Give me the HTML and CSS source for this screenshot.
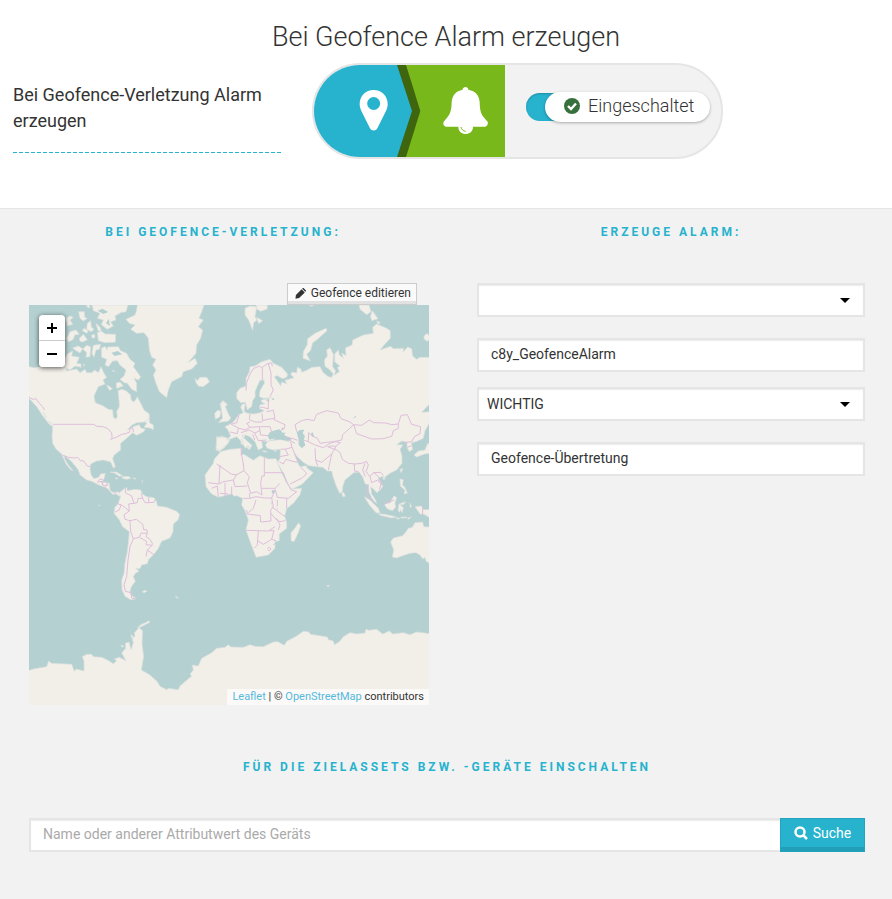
FILE: index.html
```html
<!DOCTYPE html>
<html lang="de">
<head>
<meta charset="utf-8">
<title>Bei Geofence Alarm erzeugen</title>
<link rel="stylesheet" href="styles.css">
</head>
<body>
<header class="intro">
  <h1 class="title">Bei Geofence Alarm erzeugen</h1>
  <div class="rule-row">
    <p class="rule-text">Bei Geofence-Verletzung Alarm erzeugen</p>
    <div class="rule-pill">
      <svg class="flow" viewBox="42 45 573 276" aria-hidden="true">
        <path fill="#79b81b" d="M292 45H615V321H292z"/>
        <path fill="#3f650f" d="M280 45H318L361 183 318 321H280z"/>
        <path fill="#27b2ce" d="M42 45H291L336 183 291 321H42z"/>
        <path fill="#fff" fill-rule="evenodd" d="M221 120c-24 0-42 18-42 42 0 8 2 14 5 21l26 52c4 9 18 9 22 0l26-52c3-7 5-13 5-21 0-24-18-42-42-42zm0 21a19.500 19.500 0 1 1 0 39 19.500 19.500 0 0 1 0-39z"/>
        <path fill="#fff" d="M488 119c0-11 17-11 17 0 22 4 33 18 34 38 1 26 2 37 24 58 2 8-2 15-10 15H519c0 29-44 29-44 0h-34c-9 0-13-7-10-15 21-21 23-32 24-58 1-20 12-34 33-38z"/>
        <path fill="none" stroke="#79b81b" stroke-width="3" d="M483 231c1 7 6 12 14 13"/>
      </svg>
      <label class="switch">
        <input class="switch-input" type="checkbox" checked>
        <span class="switch-thumb">
          <svg class="check" viewBox="0 0 16 16" aria-hidden="true"><circle cx="8" cy="8" r="8" fill="#37703c"/><path d="M4 8l3 3 5-5.500" fill="none" stroke="#fff" stroke-width="2.400"/></svg>
          Eingeschaltet
        </span>
      </label>
    </div>
  </div>
</header>
<main class="panel">
  <div class="columns">
    <section class="column">
      <h2 class="heading">Bei Geofence-Verletzung:</h2>
      <div class="map-area">
      <div class="map-tools">
        <button class="edit" type="button"><svg class="pencil" viewBox="0 0 12 12" aria-hidden="true"><path fill="#333" d="M1 7.500l6.200-6.200 3.500 3.500L4.500 11l-4 .6zM7.800.8l.5-.5c.4-.4.900-.4 1.300 0l2.100 2.100c.4.400.4.900 0 1.300l-.5.500z"/></svg>Geofence editieren</button>
      </div>
      <div class="map">
        <svg class="world" viewBox="0 0 1200 1200" role="img" aria-label="Weltkarte">
          <path fill="#b5d0d0" d="M0 0H1200V1200H0z"/>
          <g transform="translate(-27 -105)">
            <path class="land" d="M20 288L40 293 60 290 100 285 137 290 140 303 170 297 180 308 195 298 200 308 215 308 225 300 235 308 243 290 252 310 260 322 249 330 255 342 235 350 222 378 226 398 250 408 265 418 278 420 280 442 287 447 292 440 290 425 298 410 297 390 294 362 305 358 318 362 332 375 333 388 340 396 347 390 352 380 362 400 372 420 388 432 388 448 375 456 350 458 335 466 322 480 345 468 358 464 362 474 376 478 370 486 350 496 338 488 320 505 302 520 302 540 282 556 278 566 286 590 280 594 272 576 250 570 230 573 212 582 210 600 214 616 222 626 236 622 242 612 256 610 252 626 246 636 268 640 270 660 278 667 297 666 299 679 288 672 278 673 262 655 235 644 215 634 200 630 180 615 175 600 155 575 140 562 131 557 135 568 145 585 159 602 152 599 138 582 125 552 108 537 98 520 96 500 98 470 88 463 70 440 50 410 27 385 20 383z"/>
            <path class="land" d="M352 105L350 120 345 135 318 148 328 160 345 165 332 178 350 190 372 188 385 205 388 240 395 262 408 268 398 285 408 300 400 315 408 340 418 365 440 383 445 360 455 335 485 320 490 305 515 297 532 280 525 265 505 277 528 250 530 225 542 205 548 180 535 170 550 150 537 145 545 125 552 105z"/>
            <path class="land" d="M525 325L532 332 540 322 560 322 569 335 550 350 535 348 528 338zM244 235L255 229 262 240 262 231 295 230 302 242 320 250 330 268 345 280 340 290 362 320 356 330 342 325 350 340 350 365 335 358 322 340 312 338 300 328 312 318 318 300 300 285 292 272 278 273 265 290 255 285 260 268 245 262zM260 345L270 350 277 357 268 361zM288 340L300 336 310 348 300 351 291 356zM278 300L288 306 295 312 282 318zM375 455L388 445 388 458 400 465 400 479 390 474 372 472 380 460zM232 187L245 184 255 192 287 193 286 217 255 218 235 212zM216 105L220 122 240 130 232 145 250 150 244 164 262 178 280 168 272 155 288 150 285 138 302 128 318 125 324 105zM188 237L200 226 212 230 210 260 198 262 200 248zM220 226L242 223 238 238 228 240 222 262 216 250zM142 252L158 243 155 258 178 262 170 280 195 284 185 292 165 288 150 300 130 290 135 265zM158 234L175 228 188 236 180 249 165 240zM140 205L150 185 168 180 178 193 164 195 160 208 145 216zM178 205L190 193 202 209 188 216 180 214zM138 145L150 138 160 142 150 150 158 163 142 168zM176 125L193 125 194 142 202 145 190 153 180 145zM202 160L212 152 214 171 222 178 214 185 200 178zM228 160L240 172 244 184 234 182zM200 105L208 105 210 114 202 112zM192 175L205 182 200 190 187 182zM215 195L224 193 225 203 216 204zM270 606L290 606 308 618 298 619 285 610zM308 620L325 619 333 625 320 628 306 625zM285 624L294 624 291 628zM338 624L347 624 346 628zM584 430L594 420 602 424 600 440 586 448zM600 402L608 392 620 400 614 408 624 430 632 445 625 452 596 457 610 444 606 426zM70 425L79 442 76 444zM86 453L100 464 97 469zM310 657L315 654M366 630L368 640z"/>
            <path class="water" d="M262 307L290 304 300 320 282 325 274 332 262 326zM225 300l5-18 5 20zM205 284l4-20 4 20zM275 248l18-5 14 10-24 5zM182 290l5-20 3 22zM233 122l14-6 18 10-15 6zM258 160l8-14 4 22z"/>
            <path class="border" d="M27 381L38 388 48 386 58 400 67 409 74 420M100 463H222L230 469 250 470 265 477 275 489 276 503 272 508 290 501 305 493 320 490 329 486 330 475 339 475 340 486M128 555L145 562 165 564 173 562 182 573 190 572 202 588 211 590M232 638L240 627 249 628M244 637L252 648 265 645M255 650L258 660M283 663L286 672"/>
          </g>
          <g transform="translate(573 -105)">
            <path class="land" d="M-10 500L25 505 32 498 24 480 15 470 35 460 45 450 55 435 70 428 62 412 66 403 76 401 72 424 82 430 100 432 120 428 133 422 118 415 120 404 135 402 124 395 124 390 155 383 130 385 118 380 120 362 133 340 132 330 120 331 112 348 105 365 106 380 98 392 95 410 82 419 76 397 62 398 50 385 50 368 60 355 78 348 78 325 88 305 90 290 105 288 125 275 150 268 160 280 185 292 203 312 200 322 188 326 172 317 163 320 172 333 182 347 185 336 200 341 195 331 222 323 212 313 217 306 230 309 232 292 243 297 245 307 262 300 275 292 300 290 310 308 325 320 335 322 340 312 330 300 315 289 313 270 322 258 320 240 330 233 340 253 338 290 347 303 342 316 358 305 352 292 360 289 344 275 344 252 355 240 358 255 370 264 365 249 378 257 376 234 396 225 398 210 430 195 460 190 458 172 470 162 500 175 511 182 511 205 495 222 480 240 512 229 520 236 550 235 550 245 563 231 575 236 578 258 590 268 600 262 632 262 632 399 615 416 605 427 632 425 632 453 615 482 610 505 588 515 574 518 578 538 568 545 561 532 561 517 545 513 530 524 549 525 540 538 546 558 546 580 530 600 510 610 494 622 486 619 474 626 489 648 482 658 471 668 458 655 452 650 455 672 467 690 470 700 458 690 447 666 445 645 435 641 428 620 417 606 401 608 375 630 368 650 367 665 359 670 349 649 339 620 335 603 322 603 308 592 290 590 266 587 250 577 238 566 222 550 233 578 240 590 258 587 262 595 280 608 261 628 246 643 212 660 204 640 190 610 172 577 180 566 181 538 160 540 142 535 136 525 145 512 185 509 208 515 192 500 175 499 155 512 140 515 125 512 128 533 115 540 105 515 90 500 75 494 72 505 97 527 89 533 84 527 77 535 60 510 50 500 32 507 20 508 27 518 0 541 -12 535zM0 545L30 538 65 535 62 555 72 553 100 571 120 557 145 567 168 566 174 579 186 612 205 645 215 657 245 655 240 674 220 700 200 716 194 738 200 758 200 775 178 792 178 812 165 815 165 835 145 855 108 862 102 845 92 820 78 780 85 750 75 722 65 705 68 685 50 677 42 679 36 671 -5 682 -25 672 -42 650 -45 615 -20 580 -17 567 -2 550zM-10 505L5 499 20 503 30 510 15 532-2 544-12 540z"/>
            <path class="land" d="M3 401L10 396 23 405 15 409 24 430 32 444 25 453-4 457 8 444 5 426zM75 115L90 108 110 110 105 140 111 150 101 158 98 181 86 150 75 135zM108 105L142 105 142 117 122 124 109 117zM110 142L128 152 116 161zM318 175L321 182 290 210 278 218 272 241 260 253 271 272 249 265 250 245 262 223 262 207 285 190zM417 105L447 105 453 125 440 134 420 118zM457 122L474 146 456 152 451 140zM470 153L481 158 474 163zM612 198L622 190 632 205 622 214 612 207zM266 105L280 106 276 109zM68 492l3 12-4-2zM64 507l5 3-1 14-5-2zM78 530l15 2-5 7zM126 542l16 2-8 3zM162 542l8-3-3 6zM365 667l7 1 4 11-8 1zM236 758L242 768 234 790 222 815 213 812 213 788 223 777zM433 680L450 690 475 715 480 728 469 729 448 705zM475 731L495 733 530 741 515 744 480 736zM495 701L510 699 522 677 530 683 525 698 527 712 517 722 503 717 495 708zM537 702L557 695 550 704 540 704 550 713 547 728 541 718 540 727 534 722zM540 627L550 629 547 645 555 652 562 670 552 672 555 661 541 648zM540 598L549 596 543 608zM488 623L497 622 492 630zM582 555L595 543 615 540 623 520 632 525 632 550 614 552 590 561zM530 744h8v3h-9zM542 741h18v3h-18zM562 745l12-5-8 8zM570 700l5 10-5 2zM585 710L604 708 610 719 632 718 632 745 612 733 600 732zM320 947l8-1-3 5z"/>
            <path class="land" d="M632 771L612 770 609 762 608 756 585 758 577 772 565 775 558 785 548 797 520 804 512 816 521 840 517 861 530 864 548 857 570 850 588 848 600 855 608 867 614 862 618 873 632 883z"/>
            <path class="water" d="M148 509L143 497 150 486 160 482 178 478 189 489 197 487 192 495 215 506 210 512 190 510 170 504zM230 487L240 480 253 479 248 489 255 499 251 510 256 526 245 535 236 524 236 509zM140 388h8v6h-8zM157 385h5v5h-5zM273 490l5-3 4 12-5 2zM155 661l9 0 0 9-8 0zM152 690l3 13-2 0zM170 708l3 10-2 0zM398 446l9-9 2 3zM185 472l8 4-7 4z"/>
            <path class="border" d="M78 362L79 340 90 312 100 296 118 288 125 293 144 280 155 279 157 289M127 293V330M145 280L153 310 153 345 160 360 150 380M145 390V417L130 412 120 412M140 425L160 421 165 445 142 448 128 452 126 430M90 432L88 449 105 456 128 456M35 460L50 459 53 448 57 435M33 462L55 474 52 491 30 486M55 474L75 480 90 472 80 460 90 456M90 472L118 470 120 482 104 489 88 480 63 488M118 470L150 470 155 486M104 489L115 512 140 510M120 482L122 495 145 497M98 493L104 510M160 448L195 464 193 475 182 481M230 485L225 464 245 452 262 448 282 452 290 433 320 422 355 429 363 446 388 455 401 464 388 476 368 494 365 510 340 515 320 517 300 520 292 504 276 498 266 488 265 515 250 510M401 464L425 466 448 450 461 458 498 459 515 464 535 462 535 475 520 482 515 499 490 506 455 507 410 491 401 464M535 462L543 436 562 434 575 463 602 470 600 491 583 500 575 515 552 518M562 532L575 527M265 515L285 525 310 533 330 520 345 515 361 518 347 529 332 528 323 530 350 540 360 548 367 568 385 580 405 582 425 580 440 574 445 585 438 605 450 620 460 608 482 607 490 616M403 582L404 604 415 604M435 580L428 600 436 620M285 535L287 570 305 577 335 552 348 530M335 552L328 586 325 600M287 570L293 588M183 537L195 538 216 532 212 515M216 532L235 576M178 560L205 555 195 538M178 575L190 582 198 568 218 574 232 577M210 642L248 623 260 610 242 591M200 502L220 506 233 511M208 510L225 520M450 620L455 638 473 630 487 647M462 608L475 620 485 638 478 658M444 642L443 680 460 690M495 701L522 690M608 709V735"/>
            <path class="border" d="M63 533L65 555 70 582 72 602 50 614 35 613-10 582M0 585L-3 642-35 638M133 562V608H190M133 608V618H126L122 640 126 675 110 665 92 670 82 638 88 620 72 602M50 614L40 630 10 635-3 642M40 630L45 650 82 648M15 638L15 680M35 650V675M-25 655L-8 648-5 682M0 670L25 672M190 608L198 634 205 645 215 660 230 665 205 685 172 682 165 655 180 640M165 655L126 655M88 670L90 685 70 685M90 685L108 680 133 684 155 684 165 660M155 684L160 710 152 720 153 753 122 756 121 737 82 732 80 720M108 690L100 715 85 728M155 710L195 740M172 690V708M152 730L170 750 180 755 195 752M78 781L145 783 165 770M115 783L112 825 102 835M112 812L130 823 155 808 162 782 147 782M155 808L168 812M142 836L148 831 153 836 149 842 143 840M160 825l5-5M170 745L180 765 175 780M200 685V715"/>
          </g>
          <g transform="translate(-27 525)">
            <path class="land" d="M292 45L305 32 320 22 322 32 345 28 362 30 367 42 380 50 402 53 410 66 412 78 440 82 470 94 479 104 474 120 460 132 459 155 450 174 425 184 415 205 400 225 386 238 382 251 365 255 360 266 348 265 357 274 346 280 340 290 346 304 334 320 330 334 334 346 348 356 333 360 315 349 306 330 305 300 312 280 315 248 321 220 325 190 328 155 308 140 298 120 282 100 284 83 295 70 302 48zM366 336l8-5 7 2-8 5zM465 349l8 2 1 5zM236 75l4 1-1 3z"/>
            <path class="land" d="M20 573L45 566 80 560 86 543 94 550 155 553 163 574 168 567 192 573 192 543 187 530 200 523 215 523 220 530 245 532 262 540 280 551 290 542 283 537 298 532 318 542 305 519 317 505 316 490 327 486 333 509 340 489 337 475 345 468 343 458 357 443 368 452 366 490 371 530 364 570 390 585 412 605 420 619 440 629 445 625 475 629 480 618 515 588 510 582 520 570 517 555 535 558 545 535 575 518 590 505 615 502 625 494 632 501 670 502 690 494 705 499 730 500 760 486 773 485 793 496 800 484 830 468 850 454 865 455 872 463 922 471 925 479 940 483 943 494 958 485 970 470 990 458 1010 462 1035 459 1038 447 1045 451 1070 448 1088 462 1108 453 1118 462 1150 458 1170 464 1190 456 1230 461V680H20zM352 443l12-10 15-6 7-5 4 5-20 10-16 7zM333 463l7 7-5 5zM303 496l9 2-6 4z"/>
            <path class="border" d="M316 24L316 38 335 48 342 70 326 72 328 93 305 75 288 70M303 75L298 90 285 96M328 93L312 104 315 118 330 122 332 155 340 176 330 200 324 240 320 290 312 315 316 334 333 338 335 355 346 356M342 70L352 68 354 55 368 55 364 40M368 55L375 68 385 68 402 67 405 60M386 52V67M330 122L349 118 368 132 371 149 381 150 382 160 363 159 358 172 340 176M382 160L378 170 390 178 397 190 396 196 378 194 380 184 360 173M396 196L382 210 402 224M382 210L378 230M234 6L247 4 248 14M258 15L263 9"/>
          </g>
        </svg>
        <div class="zoom">
          <button class="zoom-button" type="button" aria-label="Vergrößern"><svg viewBox="0 0 12 12" aria-hidden="true"><path d="M6 1V11M1 6H11"/></svg></button>
          <button class="zoom-button" type="button" aria-label="Verkleinern"><svg viewBox="0 0 12 12" aria-hidden="true"><path d="M1 6H11"/></svg></button>
        </div>
        <div class="credit"><a href="#leaflet">Leaflet</a> | © <a href="#osm">OpenStreetMap</a> contributors</div>
      </div>
      </div>
    </section>
    <section class="column column-form">
      <h2 class="heading">Erzeuge Alarm:</h2>
      <form class="fields">
        <div class="pair">
          <div class="select-wrap"><select class="field" aria-label="Alarmvorlage"><option></option></select></div>
          <input class="field" type="text" value="c8y_GeofenceAlarm" aria-label="Alarmtyp">
        </div>
        <div class="pair">
          <div class="select-wrap"><select class="field" aria-label="Schweregrad"><option>WICHTIG</option></select></div>
          <input class="field" type="text" value="Geofence-Übertretung" aria-label="Alarmtext">
        </div>
      </form>
    </section>
  </div>
  <section class="targets">
    <h2 class="heading">Für die Zielassets bzw. -Geräte einschalten</h2>
    <form class="search">
      <input class="field search-field" type="text" placeholder="Name oder anderer Attributwert des Geräts" aria-label="Gerätesuche">
      <button class="search-button" type="button"><svg class="lens" viewBox="0 0 14 14" aria-hidden="true"><circle cx="6" cy="6" r="4.500"/><path d="M9 9L13 13"/></svg>Suche</button>
    </form>
  </section>
</main>
</body>
</html>
```
FILE: styles.css
```css
* {
  box-sizing: border-box;
}

body {
  margin: 0;
  min-height: 100vh;
  display: flex;
  flex-direction: column;
  background: #fff;
  color: #333;
  font-family: Roboto, "Open Sans", sans-serif;
  font-size: 14px;
  line-height: 20px;
}

button,
input,
select {
  font: inherit;
  color: inherit;
}

.intro {
  padding: 21px 13px 49px;
}

.title {
  margin: 0 0 10px;
  font-size: 27px;
  font-weight: 300;
  line-height: 32px;
  text-align: center;
}

.rule-row {
  display: flex;
  gap: 29px;
}

.rule-text {
  flex: 0 0 270px;
  align-self: flex-start;
  margin: 19px 0 0;
  padding-bottom: 19px;
  font-size: 18px;
  font-weight: 400;
  line-height: 26px;
  background: repeating-linear-gradient(90deg, #27b2ce 0 4px, transparent 4px 6px) left bottom / 100% 1px no-repeat;
}

.rule-pill {
  display: flex;
  align-items: center;
  height: 96px;
  padding-right: 11px;
  overflow: hidden;
  border: 2px solid #e5e5e5;
  border-radius: 48px;
  background: #f2f2f2;
}

.flow {
  width: 191px;
  height: 92px;
}

.switch {
  position: relative;
  margin: 0 0 8px 21px;
  padding-left: 19px;
  cursor: pointer;
}

.switch::before {
  content: "";
  position: absolute;
  top: 1px;
  left: 0;
  width: 60px;
  height: 28px;
  border-radius: 14px;
  background: #27b2ce;
  box-shadow: inset 0 1px 2px rgba(0, 0, 0, 0.2);
}

.switch-input {
  position: absolute;
  inset: 0;
  margin: 0;
  opacity: 0;
}

.switch-thumb {
  position: relative;
  display: flex;
  align-items: center;
  gap: 8px;
  width: 165px;
  height: 30px;
  padding: 0 0 2px 19px;
  border-radius: 15px;
  background: #fff;
  box-shadow: 0 1px 3px rgba(0, 0, 0, 0.3);
  font-size: 18px;
  font-weight: 300;
}

.check {
  width: 16px;
  height: 16px;
}

.panel {
  flex: 1;
  padding: 13px 0 47px;
  border-top: 1px solid #e5e5e5;
  background: #f2f2f2;
}

.columns {
  display: grid;
  grid-template-columns: 1fr 1fr;
}

.heading {
  margin: 0 0 41px;
  color: #27b2ce;
  font-size: 12px;
  font-weight: 700;
  letter-spacing: 3px;
  line-height: 20px;
  text-align: center;
  text-transform: uppercase;
}

.map-area {
  padding: 0 17px 0 29px;
}

.column-form {
  padding: 0 27px 0 31px;
}

.map-tools {
  display: flex;
  justify-content: flex-end;
  padding-right: 12px;
}

.edit {
  display: flex;
  align-items: center;
  gap: 5px;
  height: 22px;
  padding: 0 5px 2px 7px;
  border: 1px solid #ccc;
  background: #fafafa;
  box-shadow: inset 0 -3px #e1e1e1;
  font-size: 12px;
}

.pencil {
  width: 11px;
  height: 11px;
}

.map {
  position: relative;
}

.world {
  display: block;
  width: 100%;
}

.land {
  fill: #f2efe9;
  stroke: #d9e0dc;
  stroke-width: 2;
}

.water {
  fill: #b5d0d0;
}

.border {
  fill: none;
  stroke: #dfbedb;
  stroke-width: 3;
}

.zoom {
  position: absolute;
  top: 10px;
  left: 10px;
  display: flex;
  flex-direction: column;
  overflow: hidden;
  border-radius: 4px;
  box-shadow: 0 1px 5px rgba(0, 0, 0, 0.65);
}

.zoom-button {
  display: grid;
  place-items: center;
  width: 26px;
  height: 26px;
  padding: 0;
  border: 0;
  background: #fff;
}

.zoom-button:first-child {
  border-bottom: 1px solid #ccc;
}

.zoom-button svg {
  width: 12px;
  height: 12px;
  stroke: #000;
  stroke-width: 2;
}

.credit {
  position: absolute;
  right: 0;
  bottom: 0;
  padding: 0 5px;
  background: rgba(255, 255, 255, 0.7);
  font-size: 11px;
  line-height: 16px;
}

.credit a {
  color: #55b9dc;
  text-decoration: none;
}

.fields {
  display: flex;
  flex-direction: column;
  gap: 15px;
}

.pair {
  display: flex;
  flex-direction: column;
  gap: 21px;
}

.field {
  display: block;
  width: 100%;
  height: 34px;
  padding: 0 12px 2px;
  border: 2px solid #e5e5e5;
  border-radius: 0;
  background: #fff;
  box-shadow: inset 0 1px 1px rgba(0, 0, 0, 0.08);
}

.field::placeholder {
  color: #aaa;
  opacity: 1;
}

.select-wrap {
  position: relative;
}

.select-wrap .field {
  padding: 0 8px;
  appearance: none;
}

.select-wrap::after {
  content: "";
  position: absolute;
  top: 15px;
  right: 15px;
  border: 5px solid transparent;
  border-top-color: #000;
  border-bottom: 0;
  pointer-events: none;
}

.targets {
  padding: 52px 27px 0 29px;
}

.search {
  display: flex;
}

.search-field {
  flex: 1;
  border-right: 0;
}

.search-button {
  display: flex;
  align-items: center;
  justify-content: center;
  gap: 5px;
  width: 85px;
  padding: 0 0 4px;
  border: 1px solid #22a4bf;
  background: #27b2ce;
  box-shadow: inset 0 -4px #229eb8;
  color: #fff;
}

.lens {
  width: 14px;
  height: 14px;
  fill: none;
  stroke: #fff;
  stroke-width: 2.5;
}
```
